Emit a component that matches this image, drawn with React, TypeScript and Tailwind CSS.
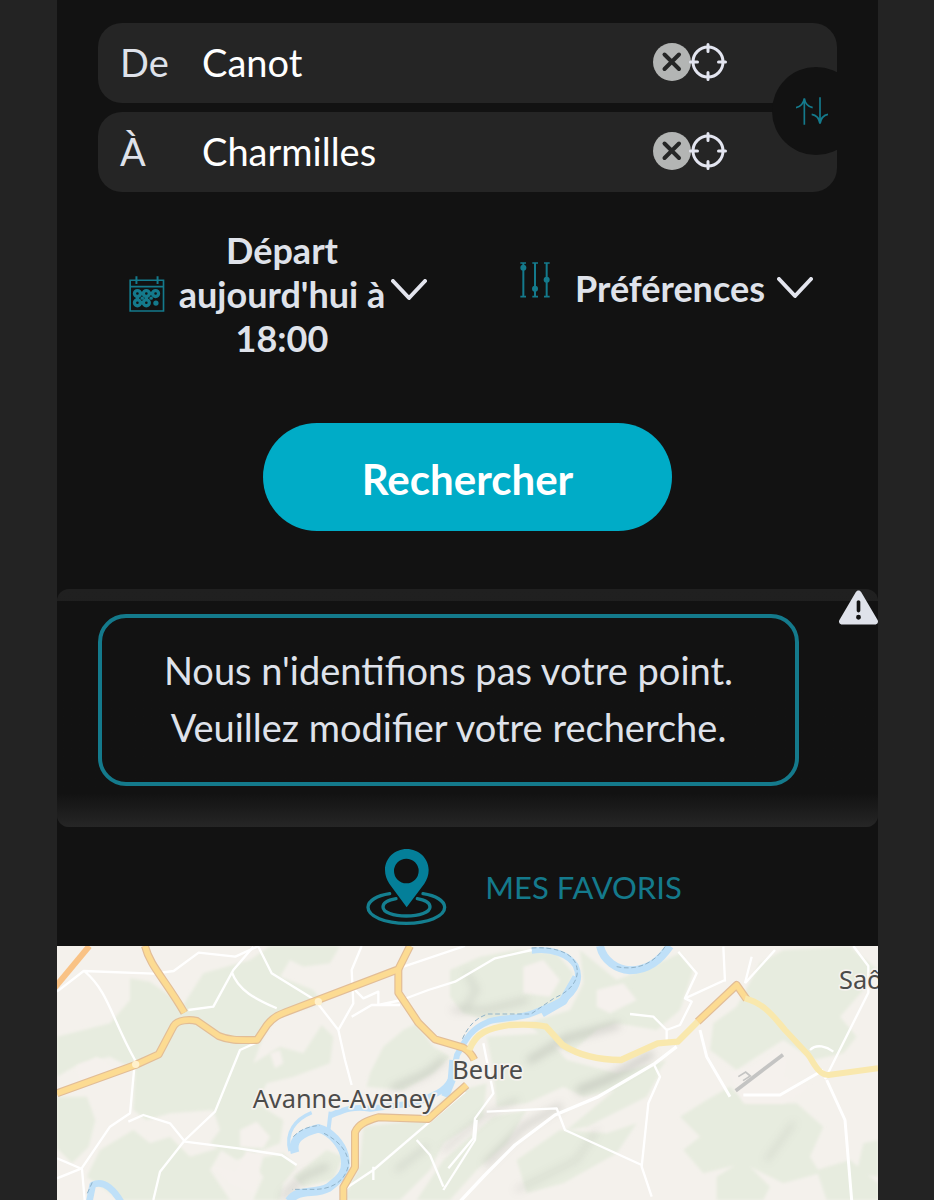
import React, { useState } from 'react';
import { FaTriangleExclamation } from 'react-icons/fa6';

interface StopFieldProps {
  id: string;
  label: string;
  value: string;
  onChange: (value: string) => void;
}

const ClearIcon = () => (
  <svg viewBox="0 0 38 38" className="w-[38px] h-[38px]" aria-hidden="true">
    <circle cx="19" cy="19" r="19" fill="#b3b5b4" />
    <path d="M11.500 11.500 26 26M26 11.500 11.500 26" stroke="#252626" strokeWidth="4" strokeLinecap="round" />
  </svg>
);

const CrosshairIcon = () => (
  <svg viewBox="0 0 38 38" className="w-[38px] h-[38px]" fill="none" stroke="#e3e5f0" aria-hidden="true">
    <circle cx="19" cy="19" r="15" strokeWidth="3" />
    <path d="M19 1.500v7M19 29.500v7M1.500 19h7M29.500 19h7" strokeWidth="3" strokeLinecap="round" />
  </svg>
);

const SwapIcon = () => (
  <svg viewBox="0 0 96 84" className="w-8 h-7" fill="none" stroke="#147a8c" strokeWidth="5" aria-hidden="true">
    <path d="M25 83V4C22 22 14 29 0 32M25 4c3 18 11 25 25 28" />
    <path d="M72 1v79c-3-18-11-26-25-28M72 80c3-18 11-26 24-28" />
  </svg>
);

const CalendarIcon = () => (
  <svg viewBox="57 169 108 109" className="w-9 h-9 shrink-0" fill="none" stroke="#147a8c" strokeWidth="5" aria-hidden="true">
    <path d="M60 182h101v93H60zM60 201h101" />
    <path d="M79 170v23M143 170v23" strokeWidth="6" />
    <g strokeWidth="10">
      <circle cx="82" cy="222" r="9" />
      <circle cx="109" cy="222" r="9" />
      <circle cx="137" cy="222" r="9" />
      <circle cx="82" cy="250" r="9" />
      <circle cx="109" cy="250" r="9" />
    </g>
    <circle cx="138" cy="251" r="8" fill="#147a8c" stroke="none" />
    <path d="M94 222h3M122 222h3M94 250h3M82 235v3M109 235v3M96 236h1M123 236h1" strokeWidth="10" strokeLinecap="round" />
  </svg>
);

const SlidersIcon = () => (
  <svg viewBox="76 67 92 108" className="w-8 h-9 shrink-0" fill="none" stroke="#147a8c" strokeWidth="5" aria-hidden="true">
    <path d="M78 70h17M78 171h17M114 70h17M114 171h17M149 70h17M149 171h17" />
    <path d="M87 70v101M122 70v101M157 70v101" strokeWidth="6" />
    <g fill="#147a8c" stroke="none">
      <circle cx="87" cy="84" r="9" />
      <circle cx="122" cy="147" r="9" />
      <circle cx="157" cy="120" r="9" />
    </g>
  </svg>
);

const ChevronIcon = () => (
  <svg viewBox="0 0 36 22" className="w-9 h-[22px] shrink-0" fill="none" stroke="#e3e5ee" strokeWidth="4" strokeLinecap="round" strokeLinejoin="round" aria-hidden="true">
    <path d="M2 2l16 17L34 2" />
  </svg>
);

const FavoriteIcon = () => (
  <svg viewBox="83 51 243 234" className="w-[81px] h-[78px]" aria-hidden="true">
    <g fill="none" stroke="#147f90" strokeWidth="10" strokeLinecap="round">
      <path d="M154 188c-38 6-65 21-65 41 0 27 51 48 115 48s115-21 115-48c0-20-27-35-65-41" />
      <path d="M173 203c-24 4-39 13-39 25 0 16 31 27 70 27s71-11 71-27c0-12-15-21-38-25" />
    </g>
    <path
      fill="#047f99"
      fillRule="evenodd"
      d="M205 54c-36 0-65 28-65 63 0 16 5 28 13 41l52 71 53-71c8-13 13-25 13-41 0-35-30-63-66-63zm-1 29a37 37 0 1 1 0 74 37 37 0 0 1 0-74z"
    />
  </svg>
);

const StopField: React.FC<StopFieldProps> = ({ id, label, value, onChange }) => (
  <div className="flex h-20 items-center rounded-3xl bg-[#252525] pb-0.5 pl-[22px] pr-[110px]">
    <label htmlFor={id} className="w-[82px] shrink-0 text-[#dfe2ea]">
      {label}
    </label>
    <input
      id={id}
      type="text"
      value={value}
      onChange={(e) => onChange(e.target.value)}
      className="min-w-0 flex-1 bg-transparent text-white outline-none"
    />
    <button type="button" aria-label="Effacer" onClick={() => onChange('')}>
      <ClearIcon />
    </button>
    <button type="button" aria-label="Me localiser" className="-ml-0.5">
      <CrosshairIcon />
    </button>
  </div>
);

const AreaMap = () => (
  <svg viewBox="21 48 2463 762" preserveAspectRatio="xMidYMid slice" className="block h-[254px] w-full bg-[#f4f1ec]" role="img" aria-label="Carte">
    <defs>
      <filter id="soft" x="-10%" y="-10%" width="120%" height="120%">
        <feGaussianBlur stdDeviation="5" />
      </filter>
      <filter id="shade" x="-30%" y="-30%" width="160%" height="160%">
        <feGaussianBlur stdDeviation="12" />
      </filter>
    </defs>

    {/* woods */}
    <g fill="#e7ecdf" filter="url(#soft)">
      <path d="M240 145L300 155 350 190 400 225 460 130 600 90 660 48H870L840 100 760 110 720 90 690 140 790 180 820 220 680 260 640 320 610 400 690 350 760 370 815 285 850 320 840 400 730 440 650 460 620 520 700 570 690 640 560 690 480 640 510 600 490 540 360 550 290 570 250 540 255 420 180 380 90 400 21 440V320L180 280 240 210z" />
      <path d="M21 500L111 500 136 570 116 650 66 700 21 655z" />
      <path d="M150 660L250 600 300 640 360 620 420 680 520 650 480 720 540 810H210L110 740z" />
      <path d="M600 690L700 670 740 710 700 760 690 810H610L640 740z" />
      <path d="M960 430L1000 350 1060 300 1100 280 1150 350 1200 380 1150 430 1060 480 950 470z" />
      <path d="M1200 120L1290 80 1400 60 1520 70 1570 130 1540 210 1470 250 1350 280 1240 250 1200 200z" />
      <path d="M1590 60L1700 150 1800 110 1890 70 1930 120 1890 240 1820 300 1700 280 1640 300 1560 370 1490 330 1430 280 1560 240 1600 160z" />
      <path d="M1310 320L1480 310 1550 390 1700 430 1850 390 1800 460 1600 500 1540 470 1430 520 1340 530 1330 420z" />
      <path d="M2130 100L2200 60 2400 50 2484 120 2440 180 2370 260 2420 320 2380 370 2290 390 2200 330 2120 380 2060 420 1980 360 1990 280 2060 230z" />
      <path d="M1970 510L2040 470 2090 520H2240L2320 590 2280 680 2310 730 2200 760 2080 700 1960 730 1900 660 1950 620 1890 560z" />
      <path d="M940 590L1110 570 1200 490 1310 460 1300 560 1180 640 1140 720 1050 810H880L930 700z" />
      <path d="M1330 560L1430 540 1370 640 1280 720 1200 810H1100L1180 690z" />
      <path d="M1400 690L1530 600 1670 610 1760 580 1700 670 1540 760 1430 790z" />
      <path d="M1720 460L1830 430 1790 500 1610 590 1550 600z" />
      <path d="M2000 740L2080 690 2160 770 2140 810H2000zM2300 720L2400 690 2484 760V810H2330z" />
      <path d="M2440 640L2484 630V740L2420 730z" />
      <path d="M730 740L830 660 880 680 850 750 760 770z" />
    </g>

    {/* clearings */}
    <g fill="#f5f1ed" filter="url(#soft)">
      <path d="M570 600L620 575 660 620 640 655 570 650z" />
      <path d="M490 710L560 725 590 660 640 680 610 790 540 760z" />
      <path d="M80 410L140 380 200 420 150 450 90 455z" />
      <path d="M660 370L690 360 700 400 675 415z" />
      <path d="M1420 110L1480 90 1530 150 1500 200 1420 190z" />
      <path d="M1640 180L1720 160 1760 210 1680 250 1640 230z" />
      <path d="M2040 430L2110 410 2180 360 2210 390 2200 440 2280 470 2200 520 2080 520z" />
    </g>

    {/* relief */}
    <g fill="none" stroke="#92958e" strokeLinecap="round" opacity=".36" filter="url(#shade)">
      <path d="M1440 390l110-65 150-40" strokeWidth="20" />
      <path d="M1590 480l90-35 120-70" strokeWidth="24" />
      <path d="M1030 475l100-45 50-40" strokeWidth="16" />
      <path d="M1210 240l100 0 120-30" strokeWidth="12" />
      <path d="M1180 660l120-100 100-50" strokeWidth="10" />
      <path d="M1310 700l110-110 110-60" strokeWidth="16" />
      <path d="M700 800l60-60 70-30" strokeWidth="16" />
      <path d="M1240 240l40-60-30-50" strokeWidth="10" />
      <path d="M1400 780l180-90 60-90" strokeWidth="8" />
      <path d="M2150 690l80-110" strokeWidth="8" />
      <path d="M1040 720l90-70" strokeWidth="10" />
    </g>

    {/* rivers */}
    <g fill="none" stroke="#bfe0f8" strokeLinejoin="round">
      <path d="M1445 62c60-8 110 10 132 45 22 48-10 95-62 115l-60 25c-50 22-100 14-140 28-60 25-70 60-94 100-12 60-14 90-60 115l-60 28-140 18c-60-8-80 5-120 20" strokeWidth="18" />
      <path d="M1475 250l65-38 40-70" strokeWidth="26" />
      <path d="M1650 48c10 45 50 70 90 73 55 0 90-30 120-73" strokeWidth="24" />
      <path d="M842 545l-8 66" strokeWidth="12" />
      <path d="M785 548c-50 20-80 60-65 115" strokeWidth="10" />
      <path d="M735 668c-12-40 20-60 70-73 40 10 70 50 78 80 12 50-10 70-48 98-40 22-90 0-118 40" strokeWidth="26" />
      <path d="M118 815l10-50c30-15 60 10 85 50" strokeWidth="20" />
      <path d="M1185 500l20-50 5-60" strokeWidth="24" />
    </g>
    <g fill="none" stroke="#8fb2c9" strokeWidth="3" strokeDasharray="14 8">
      <path d="M1445 54c62-4 112 10 130 42 22 46-12 88-62 108l-70 48h-130c-40 14-60 40-76 75" />
      <path d="M1700 110c55 12 110-5 145-60" />
      <path d="M730 620c20-20 40-30 80-34M822 610c40 20 70 50 74 90-8 60-60 80-110 78h-60" />
      <path d="M112 790l18-40" />
    </g>

    {/* lanes */}
    <g fill="none" stroke="#fff" strokeWidth="7" strokeLinejoin="round">
      <path d="M21 185l80-62 210 8 60-8 75-55 110 12 70-32M105 125c70 60 80 140 150 265l-15 160-60 40-85 125-74 30M21 685l75 32 8 93" />
      <path d="M610 50l-60 70-60 110-75 10M545 125c20 60 80 85 135 110M625 50l40 80 130 80 70 90 20 90 20 75M865 300l45-80-5-100 30-72" />
      <path d="M625 335l-55 25-75 185-90 85-75 95-20 85M235 575l45-20 80 25 45 55 160 20 130 20 45 30" />
      <path d="M1045 115l200-67M1055 210l80-30 80-25 120-70 110-25M905 170l35 35 45-20v40l70-15M905 260l60-35 85 0" />
      <path d="M1885 65l55 65-35 75 120-55M2025 155l-5-105M2085 160l20-80M2085 160l90-100M1905 205l20 10-35 70-40 15-40-40-70-8M1850 295v50M2410 48l45 60 0 80-130 260" />
      <path d="M1950 300l20 80 70 120M2080 495h110l130-75M2330 450l55 120 20 240" strokeWidth="9" />
      <path d="M1880 350l-65 50-170 100-130 55-120 90-90 90-80 85" strokeWidth="10" />
      <path d="M1810 400l20 40-35 80-20 190 30 90M1300 340l30 150-55 75-5 60-75 90M1310 545l210-10 25 65 230 105" />
      <path d="M1245 485L970 720l-90 60M1100 630l40 45 40 95M1280 570l-5 60-95 150M970 710v40" />
      <path d="M2280 360c20-20 50-10 70 5" />
    </g>

    {/* main roads */}
    <g fill="none" strokeLinejoin="round">
      <g stroke="#e2bd96" strokeWidth="24">
        <path d="M21 490l235-85 70-32 45-85c12-20 50-20 70-15l65 45c35 15 70 12 115 12l30-45c20-25 35-30 60-40L1045 118l35-70" />
        <path d="M285 48c15 60 60 100 118 200M1045 118v70l60 90 50 50 85 25c15 8 25 20 33 36M1250 465l-115 102-150-5c-35 10-60 20-70 45v105l-35 60v50" />
        <path d="M1943 275l117-110 30 43" />
      </g>
      <path d="M15 172L118 48" stroke="#f9c285" strokeWidth="18" />
      <g stroke="#fcdb92" strokeWidth="17">
        <path d="M21 490l235-85 70-32 45-85c12-20 50-20 70-15l65 45c35 15 70 12 115 12l30-45c20-25 35-30 60-40L1045 118l35-70" />
        <path d="M285 48c15 60 60 100 118 200M1045 118v70l60 90 50 50 85 25c15 8 25 20 33 36M1250 465l-115 102-150-5c-35 10-60 20-70 45v105l-35 60v50" />
        <path d="M1943 275l117-110 30 43" />
      </g>
      <path d="M1258 360c20-55 60-65 120-75 60-3 90 0 110 5l50 55c55 35 115 45 175 45l110-50 60-5 60-60" stroke="#f9e8ad" strokeWidth="19" />
      <path d="M2085 205c60 15 90 60 120 95l70 75c15 20 30 60 60 60l149-20" stroke="#f9e8ad" strokeWidth="18" />
    </g>
    <circle cx="257" cy="403" r="11" fill="#fff1cc" />
    <circle cx="805" cy="215" r="11" fill="#fff1cc" />
    <path d="M2057 482l142-108" stroke="#c4c4c3" strokeWidth="11" />
    <path d="M2065 440l22-14 14 12-22 14" stroke="#c4c4c3" strokeWidth="5" fill="none" />

    <g className="font-['Noto_Sans',sans-serif]" fill="#4c4b4a" stroke="#f5f2ee" strokeWidth="10" strokeLinejoin="round" paintOrder="stroke" fontSize="76">
      <text x="608" y="534">Avanne-Aveney</text>
      <text x="1207" y="446">Beure</text>
      <text x="2367" y="178">Saô</text>
    </g>
  </svg>
);

const App: React.FC = () => {
  const [from, setFrom] = useState('Canot');
  const [to, setTo] = useState('Charmilles');

  const handleSwap = () => {
    setFrom(to);
    setTo(from);
  };

  return (
    <div className="min-h-screen bg-[#232323] pl-[57px] pr-14 font-['Lato',sans-serif] text-[38px] leading-[44px] text-[#dfe2ea]">
      <main className="bg-[#121212]">
        <form className="px-[41px] pt-[23px] pb-[58px]" onSubmit={(e) => e.preventDefault()}>
          <div className="relative flex flex-col gap-[9px] overflow-hidden">
            <StopField id="from" label="De" value={from} onChange={setFrom} />
            <StopField id="to" label="À" value={to} onChange={setTo} />
            <button
              type="button"
              aria-label="Inverser"
              onClick={handleSwap}
              className="absolute top-11 -right-[23px] flex h-[88px] w-[88px] items-center justify-center rounded-full bg-[#121212] pr-2"
            >
              <SwapIcon />
            </button>
          </div>

          <div className="mt-9 flex items-center justify-between pl-[31px] pr-6 text-[36px] font-bold">
            <button type="button" className="flex items-center">
              <CalendarIcon />
              <span className="mx-2 w-[218px] px-1 text-center">Départ aujourd'hui à 18:00</span>
              <span className="-ml-2 mb-2">
                <ChevronIcon />
              </span>
            </button>
            <button type="button" className="mb-3 flex items-center">
              <span className="mb-4">
                <SlidersIcon />
              </span>
              <span className="ml-6 mr-3">Préférences</span>
              <ChevronIcon />
            </button>
          </div>

          <button
            type="submit"
            className="mx-auto mt-[63px] flex h-[108px] w-[409px] max-w-full items-center justify-center rounded-full bg-[#00acc7] pt-1 text-[42px] font-bold text-white"
          >
            Rechercher
          </button>
        </form>

        <section className="rounded-xl bg-linear-to-b from-[#202020] to-[#1b1b1b] pt-3">
          <div className="rounded-b-xl bg-linear-to-b from-[#121212] from-85% to-[#262626]">
            <div className="flex items-start pt-[13px] pb-[41px] pl-[41px]" role="alert">
              <p className="flex-1 rounded-[28px] border-4 border-[#147a8c] px-8 pt-6 pb-[26px] text-center leading-[57px]">
                Nous n'identifions pas votre point.
                <br />
                Veuillez modifier votre recherche.
              </p>
              <FaTriangleExclamation size={39} className="-mt-[26px] ml-10 shrink-0" />
            </div>
          </div>
        </section>

        <a href="#favoris" className="flex h-[119px] items-center justify-center gap-[38px] pl-[113px] text-[31px] text-[#147a8c]">
          <FavoriteIcon />
          <span>MES FAVORIS</span>
        </a>

        <AreaMap />
      </main>
    </div>
  );
};

export default App;
